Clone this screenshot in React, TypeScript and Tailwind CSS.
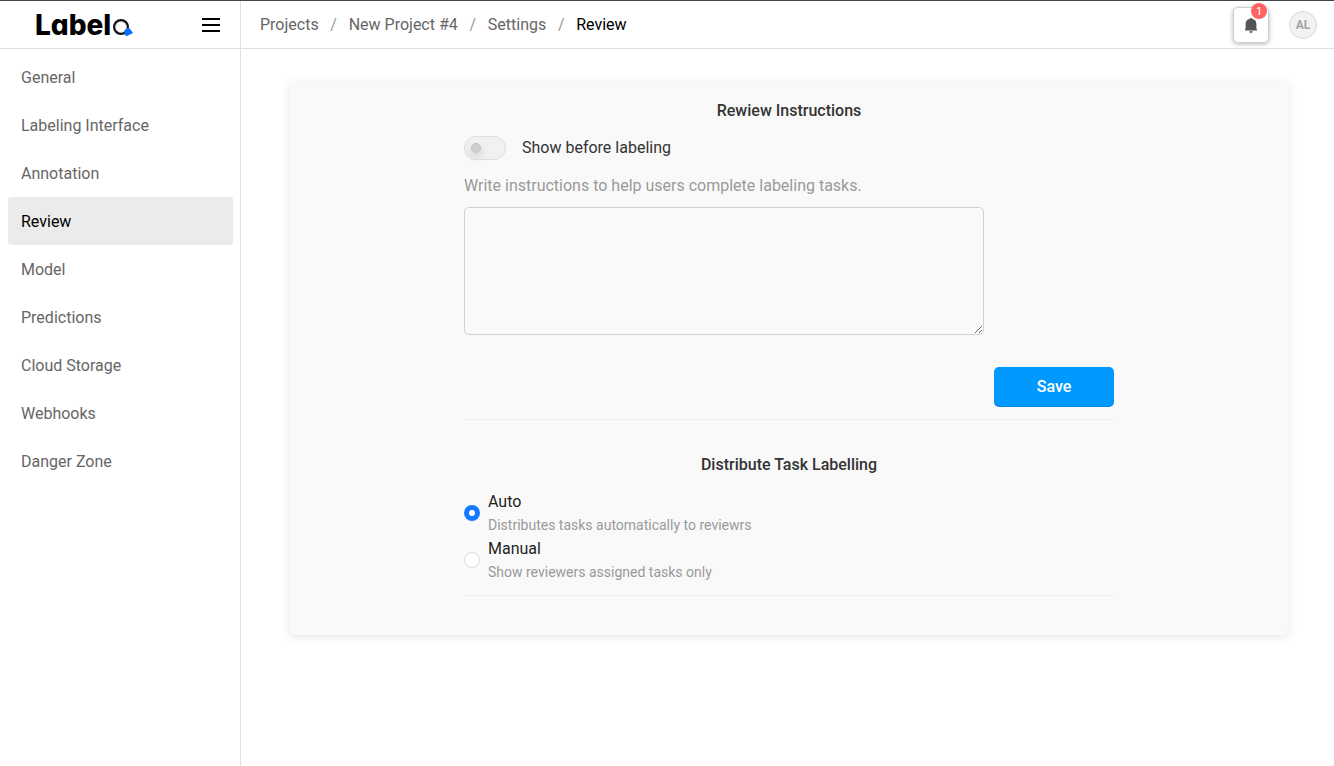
import { useState } from "react"
import { clsx } from "clsx"

const menuItems = [
  "General",
  "Labeling Interface",
  "Annotation",
  "Review",
  "Model",
  "Predictions",
  "Cloud Storage",
  "Webhooks",
  "Danger Zone",
]

const crumbs = ["Projects", "New Project #4", "Settings", "Review"]

const distributeOptions = [
  { value: "auto", title: "Auto", hint: "Distributes tasks automatically to reviewrs" },
  { value: "manual", title: "Manual", hint: "Show reviewers assigned tasks only" },
]

function Logo() {
  return (
    <a href="#" aria-label="Labelo" className="flex items-center">
      <span className="font-['Inter',sans-serif] text-[28px] leading-8 font-extrabold text-black [font-feature-settings:'cv11']">
        Label
      </span>
      <svg width="23" height="20" viewBox="0 0 23 20" aria-hidden="true" className="mt-1">
        <circle cx="10" cy="10" r="6.9" fill="none" stroke="#111" strokeWidth="2.2" />
        <circle cx="10" cy="10" r="5.4" fill="none" stroke="#999" strokeWidth="1" strokeDasharray="1.5 1.5" />
        <path d="M13.4 13L15 12.4L16.8 10.4L18.8 11.4L22 16L15.600 19.200L13.600 17.400Z" fill="#0d6efd" />
      </svg>
    </a>
  )
}

function Header() {
  return (
    <header className="flex h-[49px] border-t border-b border-t-[#444] border-b-[#e0e0e0] bg-white">
      <div className="flex w-[241px] shrink-0 items-center justify-between border-r border-[#e0e0e0] pr-5 pl-[35px]">
        <Logo />
        <button type="button" aria-label="Toggle menu">
          <svg width="18" height="14" viewBox="0 0 18 14" fill="#000">
            <rect width="18" height="2" />
            <rect y="6" width="18" height="2" />
            <rect y="12" width="18" height="2" />
          </svg>
        </button>
      </div>
      <nav aria-label="Breadcrumb" className="flex flex-1 items-center pl-[19px]">
        <ol className="flex">
          {crumbs.map((crumb, i) => (
            <li key={crumb} className="flex">
              {i > 0 && <span className="w-[30px] text-center text-[#999]">/</span>}
              <a href="#" className={i === crumbs.length - 1 ? "text-black" : "text-[#666]"}>
                {crumb}
              </a>
            </li>
          ))}
        </ol>
      </nav>
      <div className="flex items-center gap-5 pr-[17px]">
        <button
          type="button"
          aria-label="Notifications"
          className="relative flex size-9 items-center justify-center rounded-[5px] border border-[#d0d0d0] bg-white shadow-[0_1px_4px_rgba(0,0,0,0.3)]"
        >
          <svg width="12" height="16" viewBox="0 0 12 16" fill="#555">
            <path d="M6 1C5.300 1 4.900 1.300 4.800 1.800C2.200 2.300.600 4.400.600 7V11.800L0 12.400V13.500H12V12.400L11.400 11.800V7C11.400 4.400 9.800 2.300 7.200 1.800C7.100 1.300 6.700 1 6 1ZM4.200 14.200C4.400 15.200 5.100 15.900 6 15.900S7.600 15.200 7.800 14.200Z" />
          </svg>
          <span className="absolute -top-[5px] right-px flex size-4 items-center justify-center rounded-full bg-[#ff6363] pt-0.5 text-[11px] leading-4 text-white">
            1
          </span>
        </button>
        <button
          type="button"
          className="flex size-7 items-center justify-center rounded-full border border-[#d9d9d9] bg-[#f2f2f2] text-xs font-bold text-[#a3a3a3]"
        >
          AL
        </button>
      </div>
    </header>
  )
}

function Sidebar() {
  return (
    <aside className="w-[241px] shrink-0 border-r border-[#e0e0e0] pt-1 pr-[7px] pl-2">
      <nav aria-label="Settings">
        {menuItems.map((item) => (
          <a
            key={item}
            href="#"
            className={clsx(
              "flex h-12 items-center rounded-[3px] px-[13px] pt-0.5",
              item === "Review" ? "bg-[#ebebeb] text-black" : "text-[#666]"
            )}
          >
            {item}
          </a>
        ))}
      </nav>
    </aside>
  )
}

function ReviewSettings() {
  const [showBefore, setShowBefore] = useState(false)
  const [instructions, setInstructions] = useState("")
  const [mode, setMode] = useState("auto")

  return (
    <section className="w-full max-w-[1000px] rounded-lg bg-[#f9f9f9] px-6 pt-[17px] pb-[39px] shadow-[0_2px_10px_rgba(0,0,0,0.1)]">
      <div className="mx-auto max-w-[650px]">
        <h2 className="text-center leading-[26px] font-medium text-[#333]">Rewiew Instructions</h2>
        <label className="mt-3 flex items-center gap-4 text-[#333]">
          <input
            type="checkbox"
            role="switch"
            checked={showBefore}
            onChange={(e) => setShowBefore(e.target.checked)}
            className="flex h-6 w-[42px] appearance-none items-center rounded-full border border-[#dfdfdf] bg-[#f1f1f1] px-[6px] before:size-[10px] before:rounded-full before:border before:border-[#c2c2c2] before:bg-[#d0d0d0] before:shadow-[0_4px_8px_rgba(0,0,0,0.15)] checked:justify-end checked:bg-[#0099ff]"
          />
          Show before labeling
        </label>
        <label htmlFor="instructions" className="mt-[14px] block text-[#999]">
          Write instructions to help users complete labeling tasks.
        </label>
        <textarea
          id="instructions"
          value={instructions}
          onChange={(e) => setInstructions(e.target.value)}
          className="mt-[9px] block h-32 w-4/5 rounded-[5px] border border-[#d0d0d0] bg-[#fafafa] px-4 py-2"
        />
        <div className="mt-8 flex justify-end">
          <button
            type="button"
            className="h-10 w-[120px] rounded-[5px] bg-[#0099ff] font-medium text-white shadow-[inset_0_-1px_0_rgba(0,0,0,0.1)]"
          >
            Save
          </button>
        </div>
        <hr className="mt-3 border-[#efefef]" />

        <h2 className="mt-8 text-center leading-[26px] font-medium text-[#333]">Distribute Task Labelling</h2>
        <div role="radiogroup" aria-label="Distribute Task Labelling" className="mt-3 flex flex-col gap-px">
          {distributeOptions.map((option) => (
            <label key={option.value} className="flex items-center gap-2">
              <input
                type="radio"
                name="distribute"
                value={option.value}
                checked={mode === option.value}
                onChange={() => setMode(option.value)}
                className="size-4 shrink-0 appearance-none rounded-full border border-[#d9d9d9] bg-white checked:border-5 checked:border-[#1677ff]"
              />
              <span className="flex flex-col">
                <span className="text-[#1f1f1f]">{option.title}</span>
                <span className="text-sm leading-[22px] text-[#999]">{option.hint}</span>
              </span>
            </label>
          ))}
        </div>
        <hr className="mt-3 border-[#efefef]" />
      </div>
    </section>
  )
}

export default function App() {
  return (
    <div className="flex min-h-screen flex-col bg-white font-['Roboto',sans-serif] text-base leading-6">
      <Header />
      <div className="flex flex-1">
        <Sidebar />
        <main className="min-w-0 flex-1 py-8 pr-11 pl-12">
          <ReviewSettings />
        </main>
      </div>
    </div>
  )
}
